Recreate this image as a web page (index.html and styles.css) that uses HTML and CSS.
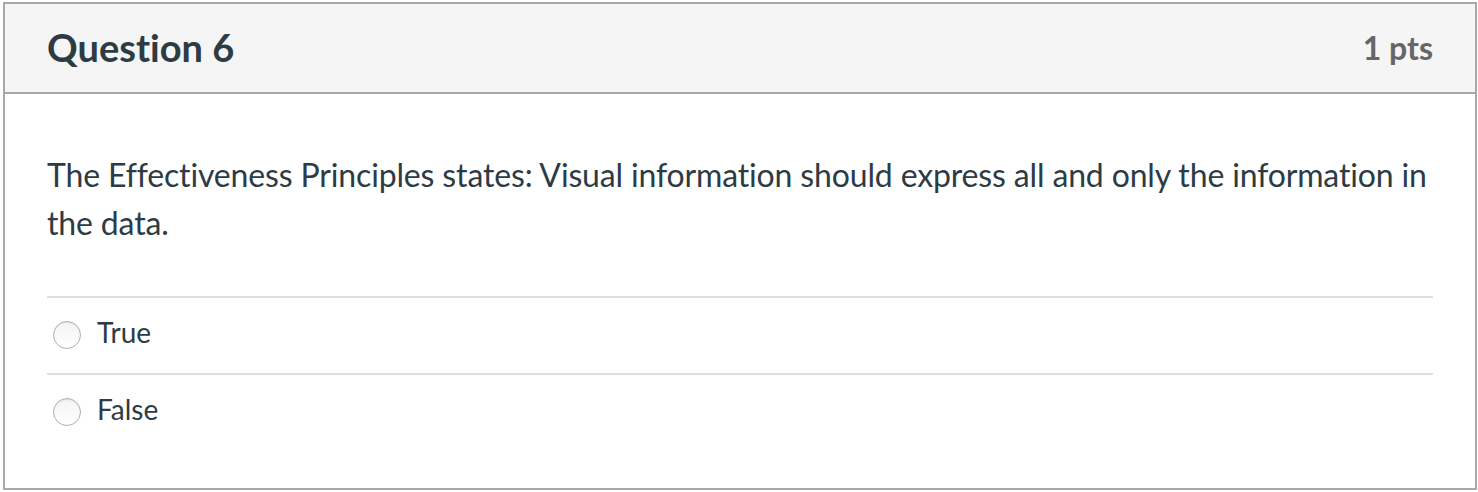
FILE: index.html
```html
<!DOCTYPE html>
<html lang="en">
<head>
<meta charset="utf-8">
<title>Question 6</title>
<link rel="stylesheet" href="styles.css">
</head>
<body>
<div class="card">
  <div class="card-header">
    <h2 class="q-title">Question 6</h2>
    <div class="q-points">1 pts</div>
  </div>
  <div class="card-body">
    <p class="q-text">The Effectiveness Principles states: Visual information should express all and only the information in the data.</p>
    <div class="answers">
      <label class="answer"><span class="radio"></span><span class="answer-label">True</span></label>
      <label class="answer"><span class="radio"></span><span class="answer-label">False</span></label>
    </div>
  </div>
</div>
</body>
</html>
```
FILE: styles.css
```css
html, body {
  margin: 0;
  padding: 0;
  background: #ffffff;
}
body {
  font-family: Lato, "Liberation Sans", sans-serif;
  color: #2d3b45;
  font-variant-ligatures: none;
  font-feature-settings: "liga" 0, "clig" 0;
}
.card {
  box-sizing: border-box;
  width: 1474px;
  height: 488px;
  margin: 2px 0 0 3px;
  border: 2px solid #a8a8a8;
  background: #ffffff;
}
.card-header {
  box-sizing: border-box;
  height: 90px;
  padding: 0 42px;
  background: #f5f5f5;
  border-bottom: 2px solid #a8a8a8;
  display: flex;
  align-items: center;
  justify-content: space-between;
}
.q-title {
  margin: 0;
  font-size: 38px;
  font-weight: 700;
  color: #2d3b45;
  line-height: 1.2;
}
.q-points {
  font-size: 32px;
  font-weight: 700;
  color: #666666;
  line-height: 1.2;
}
.card-body {
  padding: 57px 42px 0;
}
.q-text {
  margin: 0;
  font-size: 32px;
  line-height: 48px;
  letter-spacing: -0.15px;
}
.answers {
  margin-top: 49px;
}
.answer {
  box-sizing: border-box;
  height: 77px;
  display: flex;
  align-items: center;
  border-top: 2px solid #e0e0e0;
  padding-bottom: 6px;
}
.radio {
  box-sizing: border-box;
  width: 28px;
  height: 28px;
  margin-left: 6px;
  margin-right: 16px;
  border-radius: 50%;
  border: 1px solid #b0b0b0;
  background: linear-gradient(#f4f4f4, #ffffff);
  box-shadow: inset 0 1px 1px rgba(0,0,0,0.08);
  position: relative;
  top: 2px;
}
.answer-label {
  font-size: 28px;
  line-height: 1.2;
  color: #2d3b45;
}
```
